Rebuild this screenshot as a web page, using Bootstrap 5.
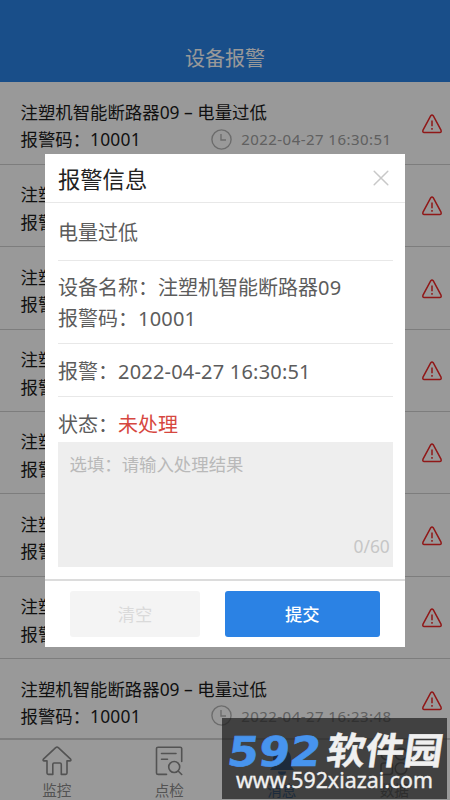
<!DOCTYPE html>
<html lang="zh-CN">
<head>
<meta charset="utf-8">
<meta name="viewport" content="width=device-width, initial-scale=1">
<title>设备报警</title>
<link href="https://cdn.jsdelivr.net/npm/bootstrap@5.3.0/dist/css/bootstrap.min.css" rel="stylesheet">
<style>
body{font-family:"Noto Sans","Noto Sans CJK SC",sans-serif;background:#fff;color:#1c1c1c}
.screen{width:450px;height:800px}
.topbar{height:82.4px;background:#2b82e4;color:#fff;font-size:20px;line-height:26px;padding-bottom:10.5px;font-weight:400}
.alarms{height:655.2px}
.alarm{height:82.4px;border-bottom:1.4px solid #d0d0d0;padding:16.5px 8px 0 20.5px;font-size:17.4px;line-height:27.5px}
.alarm .when{font-size:15px;color:#a0a0a0;letter-spacing:.45px;margin-right:30.5px}
.alarm .clock{margin-right:9px;margin-bottom:2px}
.alarm .sign{margin-top:15px}
.tabs{height:62.4px;border-top:2px solid #d2d2d2;color:#8a8a8a;font-size:14.6px;line-height:20px}
.tabs .tab{width:112.5px;padding:6px 0 0 1px}
.tabs svg{margin-bottom:4px}
.tabs .active{color:#2b82e4}
.dim{background:rgba(0,0,0,.4)}
.dialog-box{left:45px;top:154px;width:360.3px;height:493px;background:#fff;color:#5c5c5c;font-size:20px}
.head{height:49px;border-bottom:1px solid #e8e8e8;padding:3px 16px 0 13px;font-size:22.3px;color:#222}
.inner{padding:0 12.5px 0 13px}
.line{border-bottom:1px solid #e8e8e8}
.kind{height:57.5px;padding-top:4px}
.device{height:83.5px;line-height:31.4px;padding-top:11px}
.time{height:53px;padding-top:4px}
.state{height:45px;padding-top:13px}
.unhandled{color:#d64740}
.note{height:125px;background:#eee;color:#b9b9b9;font-size:17.4px;line-height:24px;padding:9.500px 3px 9px 11.5px}
.count{color:#c6c6c6}
.foot{margin-top:12px;border-top:2px solid #dcdcdc;height:68px;padding:9.5px 25.5px 0 25px}
.foot .btn{height:46.5px;font-size:17.3px;border:0;border-radius:3px;padding:3px 0 0}
.clear{width:130px;background:#f4f4f4;color:#dadada}
.submit{width:155px;background:#2b82e4;color:#fff;font-weight:500}
.num{letter-spacing:.2px}
.watermark{left:222px;top:718px;width:225px;height:81px;background:rgba(30,30,30,.72)}
</style>
<script src="https://cdn.jsdelivr.net/npm/bootstrap@5.3.0/dist/js/bootstrap.bundle.min.js"></script>
</head>
<body>
<div class="screen position-relative overflow-hidden d-flex flex-column">
  <header class="topbar d-flex align-items-end justify-content-center flex-shrink-0">设备报警</header>
  <main id="alarms" class="alarms overflow-hidden flex-shrink-0"></main>
  <nav class="tabs d-flex flex-shrink-0">
    <div class="tab d-flex flex-column align-items-center">
      <svg width="30" height="30" viewBox="0 0 30 30" fill="none" stroke="currentColor" stroke-width="1.6" stroke-linejoin="round"><path d="M13.7 1.6Q15 .6 16.3 1.6L28.6 13.2Q29.5 14.6 27.8 14.9H25V27.1Q25 28.4 23.7 28.4H19.3V18.4Q19.3 17 18 17H12Q10.8 17 10.8 18.4V28.4H6.3Q5 28.4 5 27.1V14.9H2.2Q.5 14.6 1.4 13.2Z"/></svg>
      <span>监控</span>
    </div>
    <div class="tab d-flex flex-column align-items-center">
      <svg width="30" height="30" viewBox="0 0 30 30" fill="none" stroke="currentColor" stroke-width="1.6" stroke-linecap="round"><path d="M12.5 28.4H4.2Q2.5 28.4 2.5 26.9V2.6Q2.5 1.2 4 1.2H26.2Q27.7 1.2 27.7 2.6V15.5M7.5 7.5H22M7.5 13.2H13.5M24.4 25.2L27.7 28.5"/><circle cx="20.2" cy="21" r="5.5"/></svg>
      <span>点检</span>
    </div>
    <div class="tab active d-flex flex-column align-items-center">
      <svg width="30" height="30" viewBox="0 0 30 30" fill="currentColor"><path d="M15 1.5a2 2 0 0 1 2 2C21.5 4.5 24 8 24 12v8l3 4H3l3-4v-8c0-4 2.5-7.5 7-8.5a2 2 0 0 1 2-2zM11 25.5h8a4 3.5 0 0 1-8 0z"/></svg>
      <span>消息</span>
    </div>
    <div class="tab d-flex flex-column align-items-center">
      <svg width="30" height="30" viewBox="0 0 30 30" fill="none" stroke="currentColor" stroke-width="1.6"><circle cx="8" cy="8" r="5.8"/><circle cx="22" cy="8" r="5.8"/><rect x="2" y="17" width="11.5" height="11.5" rx="3"/><circle cx="22" cy="22.5" r="5.8"/></svg>
      <span>数据</span>
    </div>
  </nav>

  <div class="dim position-absolute top-0 start-0 w-100 h-100"></div>

  <section class="dialog-box position-absolute" role="dialog">
    <div class="head d-flex align-items-center justify-content-between">
      <span>报警信息</span>
      <svg class="mb-1" width="16" height="16" viewBox="0 0 16 16" stroke="#c8c8c8" stroke-width="1.5" stroke-linecap="round"><path d="M1.2 1.2L14.8 14.8M14.8 1.2L1.2 14.8"/></svg>
    </div>
    <div class="inner">
      <div class="kind line d-flex align-items-center">电量过低</div>
      <div class="device line">
        <div>设备名称：注塑机智能断路器<span class="num">09</span></div>
        <div>报警码：<span class="num">10001</span></div>
      </div>
      <div class="time line d-flex align-items-center">报警：<span class="num">2022-04-27 16:30:51</span></div>
      <div class="state">状态：<span class="unhandled">未处理</span></div>
      <div class="note d-flex flex-column justify-content-between">
        <span>选填：请输入处理结果</span>
        <span class="count text-end">0/60</span>
      </div>
    </div>
    <div class="foot d-flex justify-content-between align-items-start">
      <button class="btn clear">清空</button>
      <button class="btn submit">提交</button>
    </div>
  </section>

  <div class="watermark position-absolute">
    <svg width="225" height="81" viewBox="0 0 225 81">
      <g transform="translate(4 47.5) skewX(-8)">
        <text x="0" y="0" font-family="DejaVu Sans" font-weight="700" font-size="41" fill="#4794ee" stroke="#4794ee" stroke-width=".6" textLength="93" lengthAdjust="spacingAndGlyphs">592</text>
        <text x="99" y="-2" font-family="Noto Sans CJK SC" font-weight="700" font-size="37" fill="#f0f0f0" stroke="#f0f0f0" stroke-width=".5" textLength="116" lengthAdjust="spacingAndGlyphs">软件园</text>
      </g>
      <text x="14" y="70" font-family="Noto Sans" font-size="22.5" fill="#f0f0f0" stroke="#f0f0f0" stroke-width=".4" textLength="197" lengthAdjust="spacingAndGlyphs">www.592xiazai.com</text>
    </svg>
  </div>
</div>
<script>
const times = Array(7).fill('2022-04-27 16:30:51').concat('2022-04-27 16:23:48');
document.getElementById('alarms').innerHTML = times.map(t => `
  <div class="alarm d-flex">
    <div class="flex-grow-1">
      <div>注塑机智能断路器09 – 电量过低</div>
      <div class="d-flex align-items-center justify-content-between">
        <span>报警码：<span class="num">10001</span></span>
        <span class="when d-flex align-items-center">
          <svg class="clock" width="21" height="21" viewBox="0 0 21 21" fill="none" stroke="#b5b5b5" stroke-width="1.4"><circle cx="10.5" cy="10.5" r="9.6"/><path d="M10 5V11H15"/></svg>${t}
        </span>
      </div>
    </div>
    <svg class="sign flex-shrink-0" width="20" height="20" viewBox="0 0 20 20" fill="none" stroke="#f02828" stroke-width="1.5" stroke-linejoin="round"><path d="M8.8 1.7Q10 .1 11.2 1.7L19 16.2Q19.7 18.4 17.8 18.5H2.2Q.3 18.4 1 16.2Z"/><path d="M10 6.5V12.2M10 14V15.7"/></svg>
  </div>`).join('');
</script>
</body>
</html>
